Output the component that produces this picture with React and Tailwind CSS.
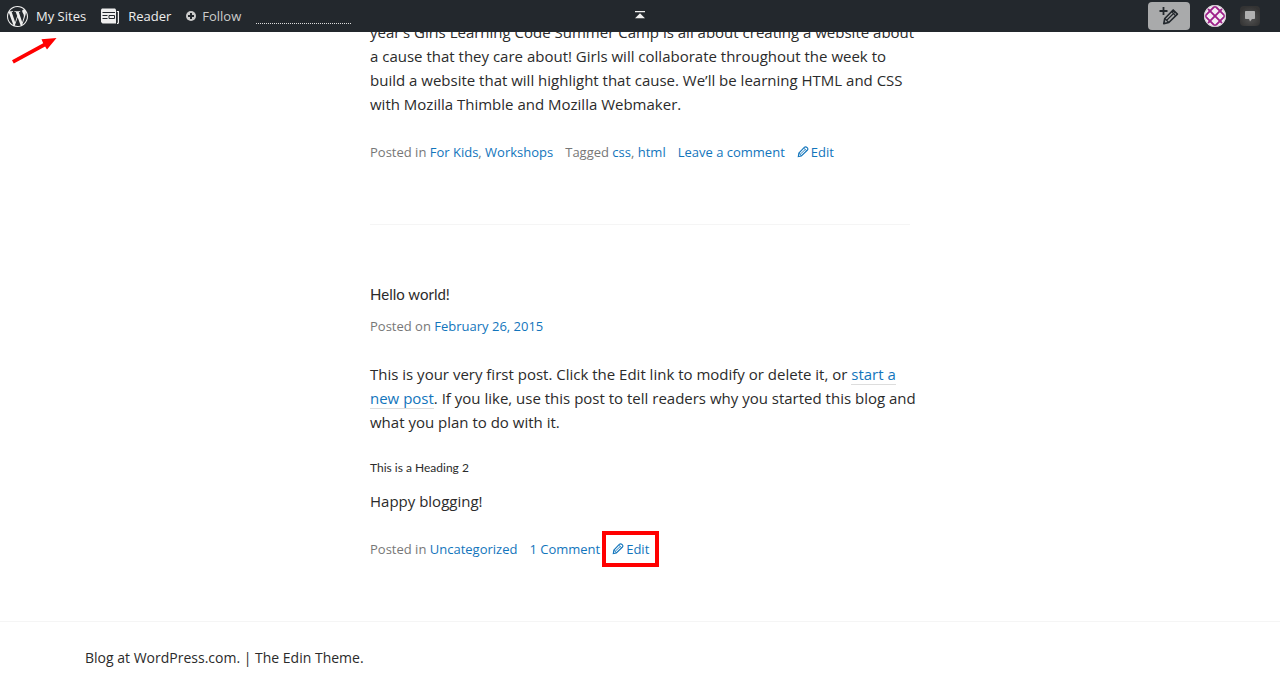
import React from "react";
import { SiWordpress } from "react-icons/si";

const linkClass = "text-[#1275bc] hover:underline";

function ReaderIcon() {
  return (
    <svg className="h-4 w-[18px] shrink-0" viewBox="0 0 18 16" fill="none" aria-hidden="true">
      <path d="M0 1.5 1 0.5H14L15 1.5V15.5H1.5L0 14Z" fill="#eee" />
      <path d="M15.8 3.5H17.4V14.5Q17.4 15.5 16 15.5" stroke="#eee" strokeWidth="1.2" />
      <path d="M1.5 4.5H14M1.5 7.5H6.5M1.5 10.5H6.5M8 7.5H13.5V10.5H8Z" stroke="#23282d" strokeWidth="1" />
    </svg>
  );
}

function FollowIcon() {
  return (
    <svg className="size-[10px] shrink-0" viewBox="0 0 10 10" aria-hidden="true">
      <circle cx="5" cy="5" r="5" fill="#ccc" />
      <path d="M5 2V8M2 5H8" stroke="#23282d" strokeWidth="2" />
    </svg>
  );
}

function WriteIcon() {
  return (
    <svg className="h-5 w-[21px]" viewBox="0 0 21 20" fill="none" stroke="#23282d" aria-hidden="true">
      <path d="M4.5 1V9M0.5 5H8.5" strokeWidth="1.8" />
      <path d="M14.2 4 18.4 8.2 9.8 16.5 4.8 17.6 5.8 12.5Z" strokeWidth="1.7" strokeLinejoin="round" />
      <path d="M5.8 12.5 9.8 16.5M7.7 14.2 15.8 6.2M12.5 5.6 16.7 9.8" strokeWidth="1.2" />
    </svg>
  );
}

function Avatar() {
  return (
    <svg className="size-[22px]" viewBox="0 0 22 22" aria-hidden="true">
      <clipPath id="avatar-clip">
        <circle cx="11" cy="11" r="10.5" />
      </clipPath>
      <circle cx="11" cy="11" r="11" fill="#f4eef4" />
      <g clipPath="url(#avatar-clip)" stroke="#9d2089" strokeWidth="1.9">
        <path d="M-4 16 16 -4M-4 26 26 -4M6 26 26 6" />
        <path d="M-4 6 16 26M-4 -4 26 26M6 -4 26 16" />
      </g>
      <circle cx="11" cy="11" r="10.4" fill="none" stroke="#d9d3d9" strokeWidth="1" />
    </svg>
  );
}

function EditLink() {
  return (
    <a href="#edit" className={linkClass}>
      <svg className="mr-[2px] inline size-3 align-[-1px]" viewBox="0 0 12 12" fill="none" stroke="currentColor" aria-hidden="true">
        <path d="M7.5 1.2Q8.8 .4 10.2 1.7 11.4 3 10.5 4L4.3 10 1.3 10.6 1.9 7Z" strokeWidth="1.1" />
        <path d="M1.9 7 4.3 10M7 2.2 9.6 4.9M3 8.5 8.2 3.5" strokeWidth="0.9" />
      </svg>
      Edit
    </a>
  );
}

function AdminBar() {
  return (
    <header className="fixed inset-x-0 top-0 z-10 grid h-8 grid-cols-[1fr_auto_1fr] items-center bg-[#23282d] text-[13px] leading-8 text-[#eee]">
      <nav className="flex items-center pl-[7px]" aria-label="Sites">
        <a href="#sites" className="flex items-center gap-2">
          <SiWordpress className="size-[21px] shrink-0" />
          My Sites
        </a>
        <a href="#reader" className="ml-[15px] flex items-center gap-[9px]">
          <ReaderIcon />
          Reader
        </a>
        <button type="button" className="ml-[15px] flex items-center gap-[6px] text-[#ccc]">
          <FollowIcon />
          Follow
        </button>
        <span className="ml-[15px] h-4 w-[95px] border-b border-dotted border-[#ddd]" />
      </nav>
      <button type="button" aria-label="Back to top">
        <svg className="size-[10px]" viewBox="0 0 10 10" fill="#eee" aria-hidden="true">
          <path d="M0 0H10V1.3H0ZM5 2.2 10 7.2H0Z" />
        </svg>
      </button>
      <div className="flex items-center justify-end pr-5">
        <button type="button" aria-label="New post" className="flex h-7 w-[42px] items-center justify-center rounded bg-[#a9aaab]">
          <WriteIcon />
        </button>
        <button type="button" aria-label="My account" className="ml-[14px]">
          <Avatar />
        </button>
        <button
          type="button"
          aria-label="Notifications"
          className="ml-[14px] flex size-5 items-center justify-center rounded-sm bg-[radial-gradient(circle_at_50%_60%,#555,#333_75%)]"
        >
          <svg className="h-3 w-[10px]" viewBox="0 0 10 12" fill="#b0b0b0" aria-hidden="true">
            <path d="M0.8 1H9.2Q10 1 10 1.8V8.2Q10 9 9.2 9H7L5 11.5 4 9H.8Q0 9 0 8.2V1.8Q0 1 .8 1Z" />
          </svg>
        </button>
      </div>
    </header>
  );
}

export default function App() {
  return (
    <div className="bg-white font-['Open_Sans',sans-serif] text-[15px] leading-6 text-[#2b2b2b]">
      <AdminBar />
      <svg className="absolute top-[37px] left-[11px] h-7 w-[46px]" viewBox="0 0 46 28" fill="#f00" aria-hidden="true">
        <path d="M1 23.2 32.2 6.3 30.5 2.3 45.5 1 36 12.5 34.1 9.5 2.8 26.5Z" />
      </svg>

      <main className="mx-auto max-w-[540px]">
        <article className="border-b border-[#f5f5f5] pt-5 pb-[60px]">
          <p className="-mr-4">
            year’s Girls Learning Code Summer Camp is all about creating a website about
            <br />
            a cause that they care about! Girls will collaborate throughout the week to
            <br />
            build a website that will highlight that cause. We’ll be learning HTML and CSS
            <br />
            with Mozilla Thimble and Mozilla Webmaker.
          </p>
          <footer className="mt-6 flex flex-wrap gap-x-3 text-[13px] text-[#777]">
            <span>
              Posted in <a href="#kids" className={linkClass}>For Kids</a>, <a href="#workshops" className={linkClass}>Workshops</a>
            </span>
            <span>
              Tagged <a href="#css" className={linkClass}>css</a>, <a href="#html" className={linkClass}>html</a>
            </span>
            <a href="#respond" className={linkClass}>Leave a comment</a>
            <EditLink />
          </footer>
        </article>

        <article className="py-[60px]">
          <h1 className="mb-[11px] font-['Lato',sans-serif] text-[15px] leading-[18px]">Hello world!</h1>
          <p className="text-[13px] text-[#777]">
            Posted on <a href="#date" className={linkClass}>February 26, 2015</a>
          </p>
          <p className="mt-6 -mr-4">
            This is your very first post. Click the Edit link to modify or delete it, or{" "}
            <a href="#new" className="border-b border-[#ddd] text-[#1275bc]">
              start a
              <br />
              new post
            </a>
            . If you like, use this post to tell readers why you started this blog and
            <br />
            what you plan to do with it.
          </p>
          <h2 className="mt-6 mb-3 font-['Lato',sans-serif] text-xs leading-[19px]">This is a Heading 2</h2>
          <p>Happy blogging!</p>
          <footer className="mt-6 flex flex-wrap gap-x-3 text-[13px] text-[#777]">
            <span>
              Posted in <a href="#uncategorized" className={linkClass}>Uncategorized</a>
            </span>
            <a href="#comments" className={linkClass}>1 Comment</a>
            <span className="relative">
              <EditLink />
              <span className="pointer-events-none absolute -inset-x-[10px] -inset-y-[6px] border-4 border-[#f00]" />
            </span>
          </footer>
        </article>
      </main>

      <footer className="border-t border-[#f5f5f5] py-6 text-sm leading-6">
        <p className="mx-auto max-w-[1110px]">
          <a href="#wordpress">Blog at WordPress.com.</a> | <a href="#theme">The Edin Theme</a>.
        </p>
      </footer>
    </div>
  );
}
